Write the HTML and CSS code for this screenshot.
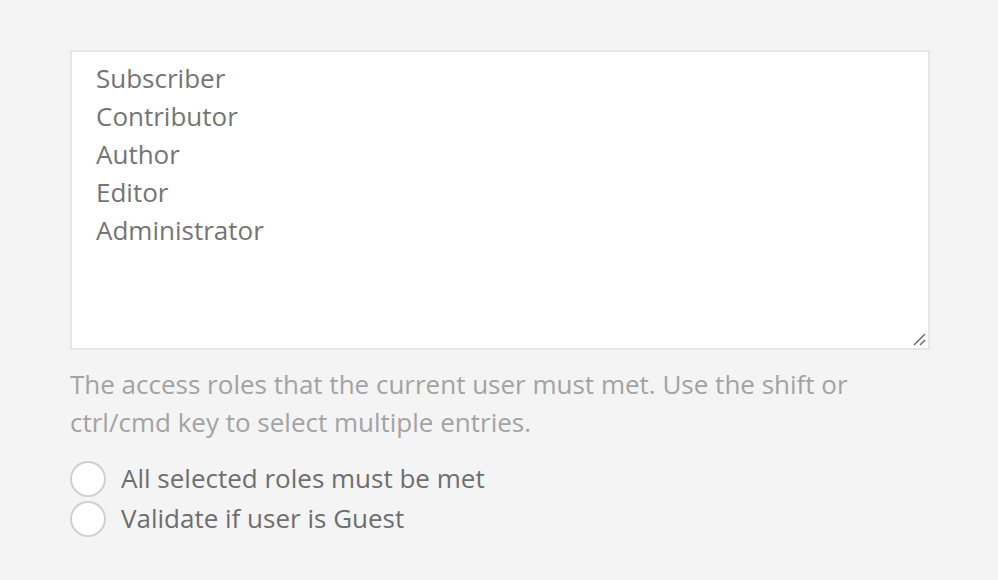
FILE: index.html
```html
<!DOCTYPE html>
<html>
<head>
<meta charset="utf-8">
<link rel="stylesheet" href="styles.css">
</head>
<body>
<div class="field">
  <div class="listbox">
    <div class="option">Subscriber</div>
    <div class="option">Contributor</div>
    <div class="option">Author</div>
    <div class="option">Editor</div>
    <div class="option">Administrator</div>
    <svg class="grip" width="14" height="14" viewBox="0 0 14 14">
      <line x1="2" y1="13" x2="13" y2="2" stroke="#666" stroke-width="1.5"/>
      <line x1="8" y1="13" x2="13" y2="8" stroke="#666" stroke-width="1.5"/>
    </svg>
  </div>
  <p class="help">The access roles that the current user must met. Use the shift or ctrl/cmd key to select multiple entries.</p>
  <div class="checks">
    <label class="check"><span class="radio"></span><span>All selected roles must be met</span></label>
    <label class="check"><span class="radio"></span><span>Validate if user is Guest</span></label>
  </div>
</div>
</body>
</html>
```
FILE: styles.css
```css
html, body {
  margin: 0;
  padding: 0;
  background: #f4f4f4;
  font-family: "Open Sans", "Noto Sans", sans-serif;
}
.field {
  padding: 50px 68px 0 70px;
}
.listbox {
  position: relative;
  box-sizing: border-box;
  width: 860px;
  height: 300px;
  background: #fff;
  border: 2px solid #e6e6e6;
  padding: 7px 24px;
}
.option {
  font-size: 26px;
  line-height: 38px;
  color: #747474;
}
.grip {
  position: absolute;
  right: 2px;
  bottom: 2px;
}
.help {
  margin: 15px 0 0;
  font-size: 26px;
  line-height: 38px;
  color: #a3a3a3;
  max-width: 800px;
}
.checks {
  margin-top: 20px;
  display: flex;
  flex-direction: column;
  gap: 4px;
}
.check {
  display: flex;
  align-items: center;
  gap: 15px;
  font-size: 26px;
  line-height: 36px;
  color: #6e6e6e;
}
.check span:last-child {
  position: relative;
  top: -1px;
}
.radio {
  box-sizing: border-box;
  width: 36px;
  height: 36px;
  border-radius: 50%;
  border: 2px solid #d0d0d0;
  background: #fff;
  flex: none;
}
```
